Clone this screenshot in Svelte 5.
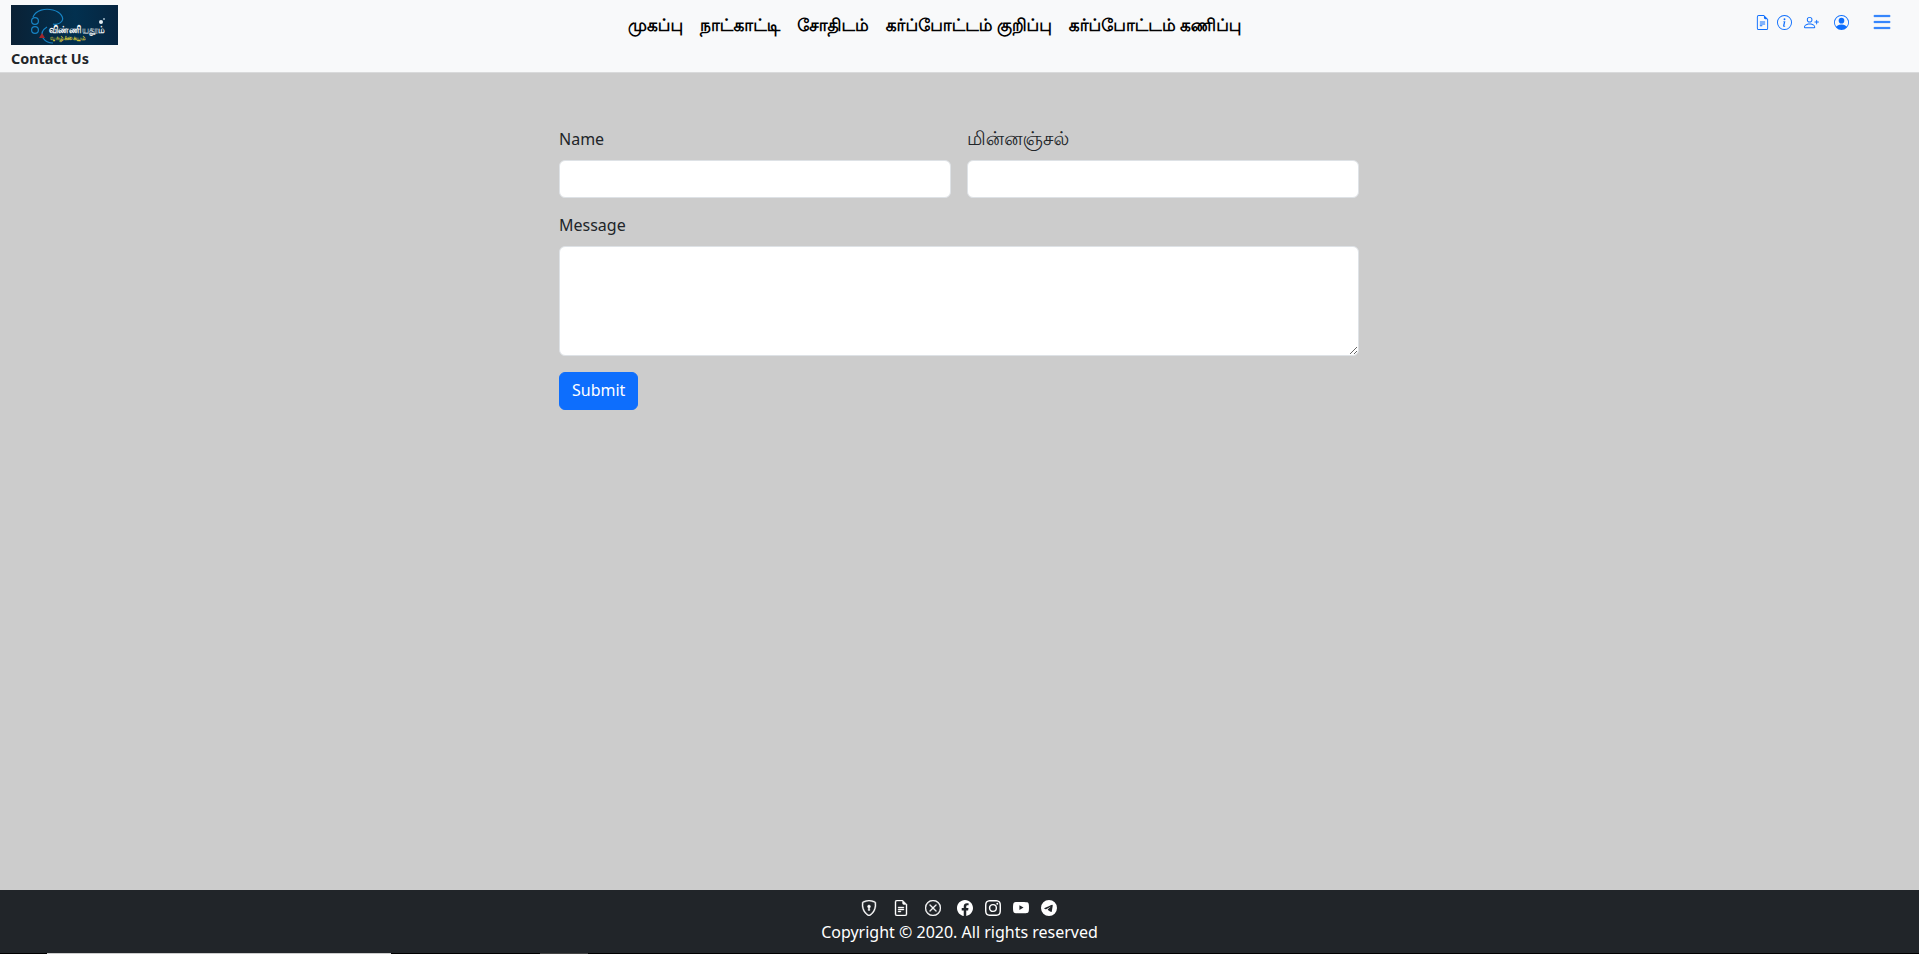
<script>
  const links = ['முகப்பு', 'நாட்காட்டி', 'சோதிடம்', 'கர்ப்போட்டம் குறிப்பு', 'கர்ப்போட்டம் கணிப்பு']
</script>

<div class="page">
  <header class="navbar">
    <div class="brand">
      <svg class="logo" viewBox="0 0 107 40" role="img" aria-label="logo">
        <defs>
          <linearGradient id="logobg" x1="0" y1="0" x2="1" y2="0">
            <stop offset="0" stop-color="#0a2135" />
            <stop offset="0.6" stop-color="#02304f" />
            <stop offset="1" stop-color="#062540" />
          </linearGradient>
        </defs>
        <rect width="107" height="40" fill="url(#logobg)" />
        <g fill="none" stroke="#1683c4" stroke-width="1.2">
          <path d="M22 12C25 5 34 3 42 5c8 2 11 8 9 11-2 3-7 4-9 3" />
          <path d="M36 22c-5 3-6 7-4 11 2 3 6 5 10 5" />
          <circle cx="24" cy="16" r="3.4" />
          <circle cx="24" cy="25" r="3.4" />
        </g>
        <path d="M28 33l3-5 3 5z" fill="#a0262c" />
        <text x="38" y="28" class="logo-top" textLength="56" lengthAdjust="spacingAndGlyphs">விண்ணியதூம்</text>
        <text x="39" y="35" class="logo-sub" textLength="36" lengthAdjust="spacingAndGlyphs">வாழ்க்கையும்</text>
        <circle cx="90" cy="17" r="2" fill="#e6eef4" />
        <circle cx="93" cy="14" r="1" fill="#9fb6c6" />
      </svg>
      <span class="page-name">Contact Us</span>
    </div>

    <nav class="links">
      {#each links as link}
        <a href="#top">{link}</a>
      {/each}
    </nav>

    <div class="tools">
      <svg class="ico" viewBox="0 0 16 16"><path d="M5.5 7a.5.5 0 0 0 0 1h5a.5.5 0 0 0 0-1zM5 9.5a.5.5 0 0 1 .5-.5h5a.5.5 0 0 1 0 1h-5a.5.5 0 0 1-.5-.5m0 2a.5.5 0 0 1 .5-.5h2a.5.5 0 0 1 0 1h-2a.5.5 0 0 1-.5-.5"/><path d="M9.5 0H4a2 2 0 0 0-2 2v12a2 2 0 0 0 2 2h8a2 2 0 0 0 2-2V4.5zm0 1v2A1.5 1.5 0 0 0 11 4.5h2V14a1 1 0 0 1-1 1H4a1 1 0 0 1-1-1V2a1 1 0 0 1 1-1z"/></svg>
      <svg class="ico" viewBox="0 0 16 16"><path d="M8 15A7 7 0 1 1 8 1a7 7 0 0 1 0 14m0 1A8 8 0 1 0 8 0a8 8 0 0 0 0 16"/><path d="m8.93 6.588-2.29.287-.082.38.45.083c.294.07.352.176.288.469l-.738 3.468c-.194.897.105 1.319.808 1.319.545 0 1.178-.252 1.465-.598l.088-.416c-.2.176-.492.246-.686.246-.275 0-.375-.193-.304-.533zM9 4.5a1 1 0 1 1-2 0 1 1 0 0 1 2 0"/></svg>
      <svg class="ico plus" viewBox="0 0 16 16"><path d="M6 8a3 3 0 1 0 0-6 3 3 0 0 0 0 6m2-3a2 2 0 1 1-4 0 2 2 0 0 1 4 0m4 8c0 1-1 1-1 1H1s-1 0-1-1 1-4 6-4 6 3 6 4m-1-.004c-.001-.246-.154-.986-.832-1.664C9.516 10.68 8.289 10 6 10s-3.516.68-4.168 1.332c-.678.678-.83 1.418-.832 1.664z"/><path fill-rule="evenodd" d="M13.5 5a.5.5 0 0 1 .5.5V7h1.5a.5.5 0 0 1 0 1H14v1.5a.5.5 0 0 1-1 0V8h-1.5a.5.5 0 0 1 0-1H13V5.5a.5.5 0 0 1 .5-.5"/></svg>
      <svg class="ico user" viewBox="0 0 16 16"><path d="M11 6a3 3 0 1 1-6 0 3 3 0 0 1 6 0"/><path fill-rule="evenodd" d="M0 8a8 8 0 1 1 16 0A8 8 0 0 1 0 8m8-7a7 7 0 0 0-5.468 11.37C3.242 11.226 4.805 10 8 10s4.757 1.225 5.468 2.37A7 7 0 0 0 8 1"/></svg>
      <svg class="menu" viewBox="0 0 16 16"><path fill-rule="evenodd" d="M2.5 12a.5.5 0 0 1 .5-.5h10a.5.5 0 0 1 0 1H3a.5.5 0 0 1-.5-.5m0-4a.5.5 0 0 1 .5-.5h10a.5.5 0 0 1 0 1H3a.5.5 0 0 1-.5-.5m0-4a.5.5 0 0 1 .5-.5h10a.5.5 0 0 1 0 1H3a.5.5 0 0 1-.5-.5"/></svg>
    </div>
  </header>

  <main class="content">
    <form class="contact" onsubmit={(e) => e.preventDefault()}>
      <div class="row">
        <div class="field">
          <label for="name">Name</label>
          <input id="name" type="text" />
        </div>
        <div class="field">
          <label for="email" class="ta">மின்னஞ்சல்</label>
          <input id="email" type="email" />
        </div>
      </div>
      <div class="field">
        <label for="message">Message</label>
        <textarea id="message"></textarea>
      </div>
      <button type="submit">Submit</button>
    </form>
  </main>

  <footer class="footer">
    <div class="social">
      <svg class="gap line" viewBox="0 0 16 16"><path d="M5.338 1.59a61 61 0 0 0-2.837.856.48.48 0 0 0-.328.39c-.554 4.157.726 7.19 2.253 9.188a10.7 10.7 0 0 0 2.287 2.233c.346.244.652.42.893.533q.18.085.293.118a1 1 0 0 0 .101.025 1 1 0 0 0 .1-.025q.114-.034.294-.118c.24-.113.547-.29.893-.533a10.7 10.7 0 0 0 2.287-2.233c1.527-1.997 2.807-5.031 2.253-9.188a.48.48 0 0 0-.328-.39c-.651-.213-1.75-.56-2.837-.855C9.552 1.29 8.531 1.067 8 1.067c-.53 0-1.552.223-2.662.524zM5.072.56C6.157.265 7.31 0 8 0s1.843.265 2.928.56c1.11.3 2.229.655 2.887.87a1.54 1.54 0 0 1 1.044 1.262c.596 4.477-.787 7.795-2.465 9.99a11.8 11.8 0 0 1-2.517 2.453 7 7 0 0 1-1.048.625c-.28.132-.581.24-.829.24s-.548-.108-.829-.24a7 7 0 0 1-1.048-.625 11.8 11.8 0 0 1-2.517-2.453C1.928 10.487.545 7.169 1.141 2.692A1.54 1.54 0 0 1 2.185 1.43 63 63 0 0 1 5.072.56"/><path d="M9.5 6.5a1.5 1.5 0 0 1-1 1.415l.385 1.99a.5.5 0 0 1-.491.595h-.788a.5.5 0 0 1-.49-.595l.384-1.99a1.5 1.5 0 1 1 2-1.415"/></svg>
      <svg class="gap line" viewBox="0 0 16 16"><path d="M5.5 7a.5.5 0 0 0 0 1h5a.5.5 0 0 0 0-1zM5 9.5a.5.5 0 0 1 .5-.5h5a.5.5 0 0 1 0 1h-5a.5.5 0 0 1-.5-.5m0 2a.5.5 0 0 1 .5-.5h2a.5.5 0 0 1 0 1h-2a.5.5 0 0 1-.5-.5"/><path d="M9.5 0H4a2 2 0 0 0-2 2v12a2 2 0 0 0 2 2h8a2 2 0 0 0 2-2V4.5zm0 1v2A1.5 1.5 0 0 0 11 4.5h2V14a1 1 0 0 1-1 1H4a1 1 0 0 1-1-1V2a1 1 0 0 1 1-1z"/></svg>
      <svg class="gap line" viewBox="0 0 16 16"><path d="M8 15A7 7 0 1 1 8 1a7 7 0 0 1 0 14m0 1A8 8 0 1 0 8 0a8 8 0 0 0 0 16"/><path d="M4.646 4.646a.5.5 0 0 1 .708 0L8 7.293l2.646-2.647a.5.5 0 0 1 .708.708L8.707 8l2.647 2.646a.5.5 0 0 1-.708.708L8 8.707l-2.646 2.647a.5.5 0 0 1-.708-.708L7.293 8 4.646 5.354a.5.5 0 0 1 0-.708"/></svg>
      <svg viewBox="0 0 16 16"><path d="M16 8.049c0-4.446-3.582-8.05-8-8.05C3.58 0-.002 3.603-.002 8.05c0 4.017 2.926 7.347 6.75 7.951v-5.625h-2.03V8.05H6.75V6.275c0-2.017 1.195-3.131 3.022-3.131.876 0 1.791.157 1.791.157v1.98h-1.009c-.993 0-1.303.621-1.303 1.258v1.51h2.218l-.354 2.326H9.25V16c3.824-.604 6.75-3.934 6.75-7.951"/></svg>
      <svg viewBox="0 0 16 16"><path d="M8 0C5.829 0 5.556.01 4.703.048 3.85.088 3.269.222 2.76.42a3.9 3.9 0 0 0-1.417.923A3.9 3.9 0 0 0 .42 2.76C.222 3.268.087 3.85.048 4.7.01 5.555 0 5.827 0 8.001c0 2.172.01 2.444.048 3.297.04.852.174 1.433.372 1.942.205.526.478.972.923 1.417.444.445.89.719 1.416.923.51.198 1.09.333 1.942.372C5.555 15.99 5.827 16 8 16s2.444-.01 3.298-.048c.851-.04 1.434-.174 1.943-.372a3.9 3.9 0 0 0 1.416-.923c.445-.445.718-.891.923-1.417.197-.509.332-1.09.372-1.942C15.99 10.445 16 10.173 16 8s-.01-2.445-.048-3.299c-.04-.851-.175-1.433-.372-1.941a3.9 3.9 0 0 0-.923-1.417A3.9 3.9 0 0 0 13.24.42c-.51-.198-1.092-.333-1.943-.372C10.443.01 10.172 0 7.998 0zm-.717 1.442h.718c2.136 0 2.389.007 3.232.046.78.035 1.204.166 1.486.275.373.145.64.319.92.599s.453.546.598.92c.11.281.24.705.275 1.485.039.843.047 1.096.047 3.231s-.008 2.389-.047 3.232c-.035.78-.166 1.203-.275 1.485a2.5 2.5 0 0 1-.599.919c-.28.28-.546.453-.92.598-.28.11-.704.24-1.485.276-.843.038-1.096.047-3.232.047s-2.39-.009-3.233-.047c-.78-.036-1.203-.166-1.485-.276a2.5 2.5 0 0 1-.92-.598 2.5 2.5 0 0 1-.6-.92c-.109-.281-.24-.705-.275-1.485-.038-.843-.046-1.096-.046-3.233s.008-2.388.046-3.231c.036-.78.166-1.204.276-1.486.145-.373.319-.64.599-.92s.546-.453.92-.598c.282-.11.705-.24 1.485-.276.738-.034 1.024-.044 2.515-.045zm4.988 1.328a.96.96 0 1 0 0 1.92.96.96 0 0 0 0-1.92m-4.27 1.122a4.109 4.109 0 1 0 0 8.217 4.109 4.109 0 0 0 0-8.217m0 1.441a2.667 2.667 0 1 1 0 5.334 2.667 2.667 0 0 1 0-5.334"/></svg>
      <svg viewBox="0 0 16 16"><path d="M8.051 1.999h.089c.822.003 4.987.033 6.11.335a2.01 2.01 0 0 1 1.415 1.42c.101.38.172.883.22 1.402l.01.104.022.26.008.104c.065.914.073 1.77.074 1.957v.075c-.001.194-.01 1.108-.082 2.06l-.008.105-.009.104c-.05.572-.124 1.14-.235 1.558a2.01 2.01 0 0 1-1.415 1.42c-1.16.312-5.569.334-6.18.335h-.142c-.309 0-1.587-.006-2.927-.052l-.17-.006-.087-.004-.171-.007-.171-.007c-1.11-.049-2.167-.128-2.654-.26a2.01 2.01 0 0 1-1.415-1.419c-.111-.417-.185-.986-.235-1.558L.09 9.82l-.008-.104A31 31 0 0 1 0 7.68v-.123c.002-.215.01-.958.064-1.778l.007-.103.003-.052.008-.104.022-.26.01-.104c.048-.519.119-1.023.22-1.402a2.01 2.01 0 0 1 1.415-1.42c.487-.13 1.544-.21 2.654-.26l.17-.007.172-.006.086-.003.171-.007A100 100 0 0 1 7.858 2zM6.4 5.209v4.818l4.157-2.408z"/></svg>
      <svg viewBox="0 0 16 16"><path d="M16 8A8 8 0 1 1 0 8a8 8 0 0 1 16 0M8.287 5.906q-1.168.486-4.666 2.01-.567.225-.595.442c-.03.243.275.339.69.47l.175.055c.408.133.958.288 1.243.294q.39.01.868-.32 3.269-2.206 3.374-2.23c.05-.012.12-.026.166.016s.042.12.037.141c-.03.129-1.227 1.241-1.846 1.817-.193.18-.33.307-.358.336a8 8 0 0 1-.188.186c-.38.366-.664.64.015 1.088.327.216.589.393.85.571.284.194.568.387.936.629q.14.092.27.187c.331.236.63.448.997.414.214-.02.435-.22.547-.82.265-1.417.786-4.486.906-5.751a1.4 1.4 0 0 0-.013-.315.34.34 0 0 0-.114-.217.53.53 0 0 0-.31-.093c-.3.005-.763.166-2.984 1.09"/></svg>
    </div>
    <p class="copy">Copyright © 2020. All rights reserved</p>
  </footer>

  <div class="strip">
    <span class="seg-light"></span>
    <span class="seg-dark"></span>
  </div>
</div>

<style>
  :global(body) {
    margin: 0;
    background: #ccc;
    font-family: "Noto Sans", "Liberation Sans", sans-serif;
    font-size: 16px;
    line-height: 1.5;
    color: #212529;
  }

  .page {
    display: flex;
    flex-direction: column;
    height: 954px;
    overflow: hidden;
  }

  .navbar {
    display: flex;
    align-items: flex-start;
    height: 73px;
    box-sizing: border-box;
    padding: 5px 0 0 11px;
    background: #f8f9fa;
    border-bottom: 1px solid #d9dadb;
    flex-shrink: 0;
  }

  .brand {
    display: flex;
    flex-direction: column;
    width: 450px;
    flex-shrink: 0;
  }

  .logo {
    display: block;
    width: 107px;
    height: 40px;
  }

  .logo-top {
    font-size: 10px;
    font-weight: 700;
    fill: #f3f5f6;
  }

  .logo-sub {
    font-size: 7px;
    font-weight: 700;
    fill: #d6c437;
  }

  .page-name {
    font-size: 14.4px;
    font-weight: 700;
    line-height: 21px;
    margin-top: 3px;
  }

  .links {
    display: flex;
    gap: 17px;
    margin-left: 167px;
    margin-top: 7px;
  }

  .links a {
    color: #000;
    font-weight: 600;
    font-size: 17px;
    text-rendering: geometricPrecision;
    text-decoration: none;
    white-space: nowrap;
  }

  .tools {
    display: flex;
    align-items: center;
    margin-left: auto;
    margin-right: 25px;
    margin-top: 5px;
    gap: 8px;
    height: 24px;
  }

  .ico {
    width: 15px;
    height: 15px;
    fill: #0d6efd;
  }

  .ico:first-child {
    margin-right: -1px;
  }

  .plus {
    margin-left: 4px;
  }

  .user {
    margin-left: 7px;
  }

  .menu {
    width: 24px;
    height: 24px;
    fill: #0d6efd;
    stroke: #0d6efd;
    stroke-width: 0.25;
    margin-left: 13px;
  }

  .content {
    flex: 1;
    min-height: 0;
    padding-top: 55px;
  }

  .contact {
    display: flex;
    flex-direction: column;
    gap: 16px;
    width: 800px;
    margin-left: 559px;
  }

  .row {
    display: grid;
    grid-template-columns: 1fr 1fr;
    gap: 16px;
  }

  .field {
    display: flex;
    flex-direction: column;
  }

  label {
    line-height: 22px;
    height: 22px;
    margin-bottom: 10px;
  }

  label.ta {
    font-size: 19px;
    line-height: 20px;
    text-rendering: geometricPrecision;
  }

  input,
  textarea {
    display: block;
    box-sizing: border-box;
    width: 100%;
    padding: 6px 12px;
    background: #fff;
    border: 1px solid #dee2e6;
    border-radius: 6px;
    font: inherit;
    color: #212529;
  }

  input {
    height: 38px;
  }

  textarea {
    height: 110px;
    resize: vertical;
  }

  button {
    align-self: flex-start;
    height: 38px;
    padding: 0 12px 2px;
    background: #0d6efd;
    color: #fff;
    border: 1px solid #0d6efd;
    border-radius: 6px;
    font: inherit;
  }

  .footer {
    height: 63px;
    box-sizing: border-box;
    padding-top: 10px;
    background: #212529;
    color: #fff;
    text-align: center;
    flex-shrink: 0;
  }

  .social {
    display: flex;
    justify-content: center;
    gap: 12px;
    height: 16px;
    margin-left: -2px;
  }

  .social svg {
    width: 16px;
    height: 16px;
    fill: #fff;
  }

  .social .gap {
    margin-right: 4px;
  }

  .social .line {
    stroke: #fff;
    stroke-width: 0.4;
  }

  .copy {
    margin: 4px 0 0;
    line-height: 24px;
  }

  .strip {
    display: flex;
    height: 1px;
    background: #000;
    flex-shrink: 0;
    padding-left: 47px;
  }

  .seg-light {
    width: 344px;
    background: #ccc;
  }

  .seg-dark {
    width: 48px;
    margin-left: 149px;
    background: #444;
  }
</style>
